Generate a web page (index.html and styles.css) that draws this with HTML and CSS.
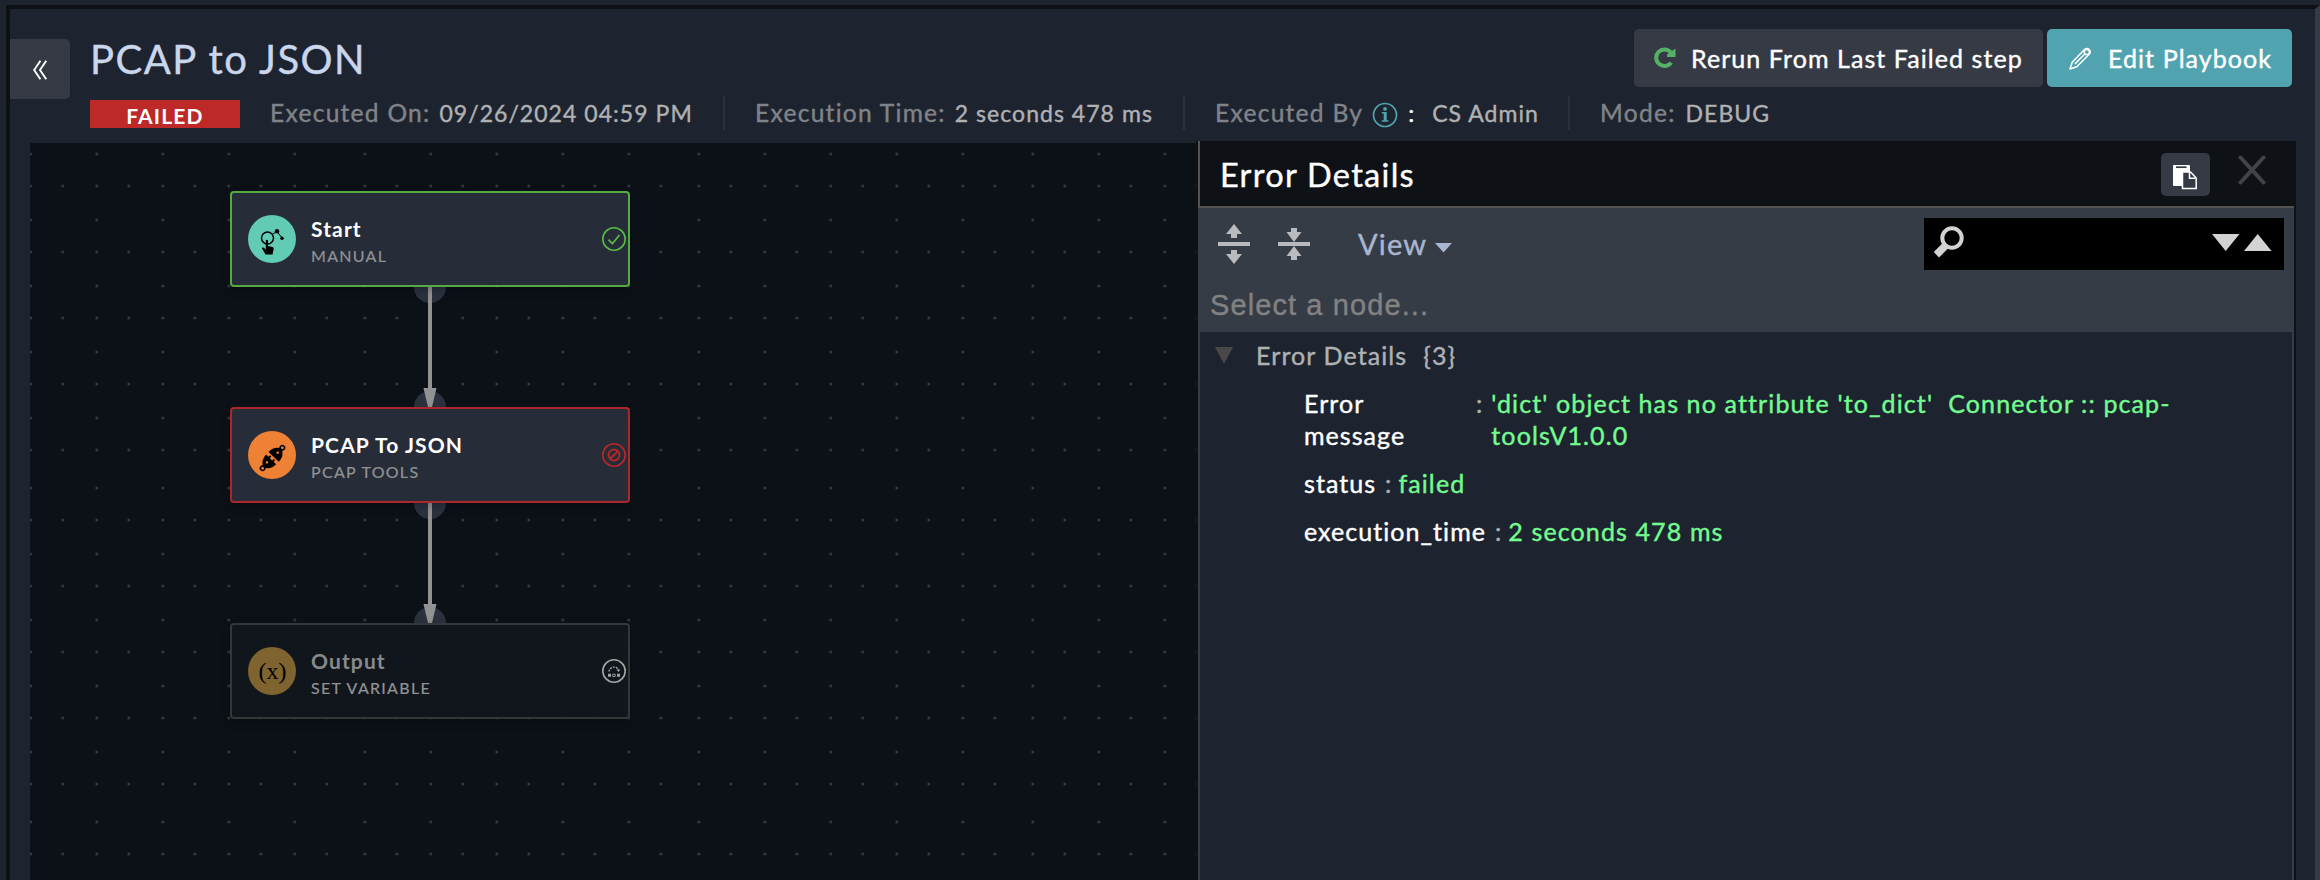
FILE: index.html
```html
<!DOCTYPE html>
<html lang="en">
<head>
<meta charset="utf-8">
<title>PCAP to JSON</title>
<link rel="stylesheet" href="styles.css">
</head>
<body>
<div class="app">
  <main class="page">
    <header class="header">
      <button class="toggle" aria-label="Collapse">
        <svg width="18" height="24" viewBox="0 0 18 24" fill="none" stroke="#fff" stroke-width="2.300"><path d="M9.500 1 2 12l7.500 11M16.500 1 9 12l7.500 11"/></svg>
      </button>
      <div class="header-body">
        <div class="title-row">
          <h1 class="title">PCAP to JSON</h1>
          <div class="actions">
            <button class="btn btn-rerun">
              <svg width="22" height="22" viewBox="0 0 22 22"><path d="M17.200 15.600A8.300 8.300 0 1 1 16.700 5.200" fill="none" stroke="#55b166" stroke-width="4"/><path d="M21.500 1.500V10h-8.500v-2.600z" fill="#55b166"/></svg>
              <span>Rerun From Last Failed step</span>
            </button>
            <button class="btn btn-edit">
              <svg width="23" height="23" viewBox="0 0 23 23" fill="none" stroke="#fff" stroke-width="1.500" stroke-linejoin="round"><path d="M1 22 3.200 15.200 15.500 2.600a3.200 3.200 0 0 1 4.700 0 3.200 3.200 0 0 1 0 4.700L7.800 19.700z"/><path d="M6 16.900 15.500 7.300"/><circle cx="17.800" cy="5" r="2.600"/></svg>
              <span>Edit Playbook</span>
            </button>
          </div>
        </div>
        <div class="meta">
          <span class="badge">FAILED</span>
          <div class="meta-item"><span class="label">Executed On:</span><span class="value">09/26/2024 04:59 PM</span></div>
          <div class="meta-item"><span class="label">Execution Time:</span><span class="value">2 seconds 478 ms</span></div>
          <div class="meta-item meta-by"><span class="label">Executed By</span>
            <svg class="info" width="26" height="26" viewBox="0 0 26 26"><circle cx="13" cy="13" r="11.500" fill="none" stroke="#4fa3ae" stroke-width="1.700"/><path d="M9.800 10h4.900v8.200h1.600v1.500H9.800v-1.500h1.900v-6.700H9.800z" fill="#4fa3ae"/><circle cx="13" cy="6.900" r="1.900" fill="#4fa3ae"/></svg>
            <span class="colon">:</span><span class="value">CS Admin</span></div>
          <div class="meta-item meta-last"><span class="label">Mode:</span><span class="value">DEBUG</span></div>
        </div>
      </div>
    </header>

    <div class="workspace">
      <section class="canvas">
        <svg class="wires" width="1166" height="737" viewBox="0 0 1166 737">
          <defs>
            <g id="sparse" fill="#34383d"><circle cx="1.800" cy="2" r="1.500"/><circle cx="67.800" cy="2" r="1.500"/><circle cx="133.800" cy="2" r="1.500"/><circle cx="199.800" cy="2" r="1.500"/><circle cx="265.800" cy="2" r="1.500"/></g>
            <g id="full"><use href="#sparse"/><use href="#sparse" x="32"/></g>
            <pattern id="dots" width="334" height="334" patternUnits="userSpaceOnUse" x="-1" y="9">
              <use href="#sparse"/><use href="#full" y="32"/><use href="#sparse" y="66"/><use href="#full" y="98"/><use href="#sparse" y="132"/><use href="#full" y="164"/><use href="#sparse" y="198"/><use href="#full" y="230"/><use href="#sparse" y="264"/><use href="#full" y="296"/>
            </pattern>
          </defs>
          <rect width="1166" height="737" fill="url(#dots)"/>
          <g fill="#2b323e"><circle cx="400" cy="144" r="16"/><circle cx="400" cy="264" r="16"/><circle cx="400" cy="360" r="16"/><circle cx="400" cy="480" r="16"/></g>
          <g fill="#929292"><path d="M398 144h4v120h-4zM393.500 245h13l-4.500 19h-4z"/><path d="M398 360h4v120h-4zM393.500 461h13l-4.500 19h-4z"/></g>
        </svg>

        <article class="node node-start">
          <svg class="node-icon" width="48" height="48" viewBox="0 0 48 48"><circle cx="24" cy="24" r="24" fill="#61ccb3"/><circle cx="19.500" cy="23" r="6" fill="none" stroke="#000" stroke-width="1.500"/><path d="M24 19.500 29 16.500l5 6.500" fill="none" stroke="#000"/><circle cx="29" cy="16.300" r="2.200"/><circle cx="34" cy="23.200" r="1.700"/><path d="M17.800 25.500q1.200-1.300 2.200 0V31l4.500 1q1.500.5 1.200 2.200L24.500 39.500h-7L14 33.500q0-1.500 1.500-1l2.300 2z"/></svg>
          <div class="node-text"><div class="node-name">Start</div><div class="node-type">MANUAL</div></div>
          <svg class="node-state" width="24" height="24" viewBox="0 0 24 24" fill="none" stroke="#57bb45"><circle cx="12" cy="12" r="11.200" stroke-width="1.600"/><path d="m6.500 12.700 3.800 4 7.200-8.700" stroke-width="1.800"/></svg>
        </article>

        <article class="node node-pcap">
          <svg class="node-icon" width="48" height="48" viewBox="0 0 48 48"><circle cx="24" cy="24" r="24" fill="#ee8133"/><g transform="rotate(-46 24.500 27)"><path d="M11.500 27q3-7 11-7v3.200h2.200v2h-2.200v3.300h2.200v2h-2.200v3.500Q14.500 34 11.500 27z"/><path d="M37.500 27q-3-7-11.300-7v14Q34.500 34 37.500 27z"/><circle cx="10.300" cy="27" r="2.200" fill="none" stroke="#000" stroke-width="1.500"/><circle cx="38.700" cy="27" r="2.200" fill="none" stroke="#000" stroke-width="1.500"/><circle cx="17.500" cy="26" r="1.300" fill="#ee8133"/><circle cx="32" cy="27" r="1.300" fill="#ee8133"/></g></svg>
          <div class="node-text"><div class="node-name">PCAP To JSON</div><div class="node-type">PCAP TOOLS</div></div>
          <svg class="node-state" width="24" height="24" viewBox="0 0 24 24" fill="none" stroke="#ba2628"><circle cx="12" cy="12" r="11.200" stroke-width="1.600"/><circle cx="12" cy="12" r="5.500" stroke-width="1.800"/><path d="m8.300 15.500 7.400-7" stroke-width="1.800"/></svg>
        </article>

        <article class="node node-output">
          <svg class="node-icon" width="48" height="48" viewBox="0 0 48 48"><circle cx="24" cy="24" r="24" fill="#7f642f"/><text x="24.500" y="32" text-anchor="middle" class="fx">(x)</text></svg>
          <div class="node-text"><div class="node-name">Output</div><div class="node-type">SET VARIABLE</div></div>
          <svg class="node-state" width="24" height="24" viewBox="0 0 24 24" fill="none" stroke="#a3a4a6"><circle cx="12" cy="12" r="11.200" stroke-width="1.600"/><path d="M7 12.500a5 5 0 0 1 9.500-1.500" stroke-width="1.400" stroke-dasharray="2 1"/><path d="M14.500 10.500h3.600l-1.500 2.500z" fill="#a3a4a6" stroke="none"/><path d="M6 14.800h3v3H6zM15 14.800h3v3h-3z" fill="#a3a4a6" stroke="none"/><path d="M10.700 15.200h2.500v2.300h-2.500z" stroke-width=".9"/></svg>
        </article>
      </section>

      <aside class="panel">
        <div class="panel-head">
          <h2 class="panel-title">Error Details</h2>
          <button class="copy" aria-label="Copy">
            <svg width="26" height="28" viewBox="0 0 26 28"><rect x="1" y="1" width="17" height="21" rx="1" fill="#fff"/><path d="M4 3.200h10.500" stroke="#353945" stroke-width="1.700"/><path d="M10.500 8h8l5.700 6v10.500H10.500z" fill="#353945" stroke="#fff" stroke-width="1.500"/><path d="M17.500 8v6.200h6" fill="none" stroke="#fff" stroke-width="1.500"/></svg>
          </button>
          <svg class="close" width="28" height="30" viewBox="0 0 28 30" stroke="#434447" stroke-width="4" stroke-linecap="round"><path d="M2.500 2.500l23 25M25.500 2.500l-23 25"/></svg>
        </div>
        <div class="panel-body">
          <div class="tools">
            <svg class="tool" width="32" height="40" viewBox="0 0 32 40" fill="#b9babd"><path d="M0 18h32v4H0zM16 0l8 10h-5v4h-6v-4H8zM16 40l8-10h-5v-4h-6v4H8z"/></svg>
            <svg class="tool tool-collapse" width="32" height="40" viewBox="0 0 32 40" fill="#b9babd"><path d="M0 18h32v4H0zM16 18 8.500 8h4.500V4h6v4h4.500zM16 22l-7.500 10H13v4h6v-4h4.500z"/></svg>
            <span class="view">View</span>
            <svg class="caret" width="17" height="10" viewBox="0 0 17 10"><path d="M0 0h17L8.500 9.500z" fill="#a9b6cf"/></svg>
            <div class="search">
              <svg width="32" height="32" viewBox="0 0 32 32"><circle cx="19" cy="12" r="9.700" fill="none" stroke="#d3d3d3" stroke-width="4"/><path d="M10.200 16.500 15.500 22 6 31.500 .8 26z" fill="#d3d3d3"/></svg>
              <svg class="arrows" width="60" height="17" viewBox="0 0 60 17" fill="#d3d3d3"><path d="M0 0h27.500L13.700 17zM32 17h27.500L45.700 0z"/></svg>
            </div>
          </div>
          <div class="path">Select a node...</div>
          <div class="tree">
            <div class="tree-root">
              <svg width="18" height="17" viewBox="0 0 18 17"><path d="M0 0h18L9 17z" fill="#484848"/></svg>
              <span class="root-name">Error Details</span><span>{3}</span>
            </div>
            <div class="pair"><span class="key key-wide">Error message</span><span class="sep">:</span><span class="val">'dict' object has no attribute 'to_dict'&nbsp; Connector :: pcap-toolsV1.0.0</span></div>
            <div class="pair"><span class="key">status</span><span class="sep">:</span><span class="val">failed</span></div>
            <div class="pair"><span class="key">execution_time</span><span class="sep">:</span><span class="val">2 seconds 478 ms</span></div>
          </div>
        </div>
      </aside>
    </div>
  </main>
</div>
</body>
</html>
```
FILE: styles.css
```css
* { box-sizing: border-box; }
body {
  margin: 0;
  font-family: Lato, sans-serif;
  background: #1e242f;
  color: #b0b1b3;
  -webkit-text-stroke: .4px currentColor;
}
button { border: 0; padding: 0; font: inherit; color: #fff; letter-spacing: inherit; }
svg { display: block; flex: none; }
h1, h2 { margin: 0; font-weight: 400; }

.app {
  width: 2320px;
  height: 880px;
  padding: 5px 0 0 6px;
  overflow: hidden;
}
.page {
  height: 875px;
  border-top: 4px solid #0d1015;
  border-left: 4px solid #0d1015;
  border-right: 5px solid #353b47;
  display: flex;
  flex-direction: column;
}
.header { display: flex; height: 134px; flex: none; }
.toggle {
  width: 60px;
  height: 60px;
  margin: 30px 20px 0 0;
  display: flex;
  align-items: center;
  padding: 2px 0 0 21px;
  background: #353a45;
  border-radius: 0 5px 5px 0;
}
.toggle svg { height: 20px; }
.header-body { flex: 1; padding: 20px 23px 0 0; }
.title-row { display: flex; justify-content: space-between; align-items: center; height: 58px; }
.title { font-size: 40px; line-height: 58px; padding-top: 2px; letter-spacing: 1.5px; color: #c9d6ec; }
.actions { display: flex; gap: 4px; }
.btn {
  height: 58px;
  display: flex;
  align-items: center;
  gap: 15px;
  padding-left: 20px;
  font-size: 25px;
  letter-spacing: 1.07px;
  border-radius: 5px;
  white-space: nowrap;
}
.btn-rerun { width: 409px; background: #353a45; }
.btn-edit { width: 245px; background: #51a4af; }
.btn-edit svg { margin: 0 1px 0 2px; }

.meta {
  display: grid;
  grid-template-columns: 150px 485px 460px 385px 300px;
  height: 34px;
  margin-top: 9px;
}
.badge {
  height: 28px;
  margin-top: 4px;
  background: #bd2829;
  color: #fff;
  font-weight: 700;
  font-size: 21px;
  line-height: 31px;
  letter-spacing: 1.2px;
  text-align: center;
  -webkit-text-stroke: 0;
}
.meta-item {
  display: flex;
  align-items: baseline;
  gap: 9px;
  padding-left: 30px;
  line-height: 34px;
  border-right: 2px solid #2c313d;
  white-space: nowrap;
}
.meta-last { border-right: 0; }
.label { font-size: 24.6px; letter-spacing: 1.25px; color: #808389; }
.value { font-size: 23px; letter-spacing: 1.040px; color: #b0b1b3; }
.info { align-self: center; margin: 4px 0 0 0; }
.colon { font-size: 24px; color: #fff; margin: 0 9px 0 1px; }
.meta-last .value { margin-left: 1px; }

.workspace { flex: 1; display: flex; padding-left: 20px; min-height: 0; }
.canvas { position: relative; width: 1166px; background: #0c1118; overflow: hidden; }
.wires { position: absolute; left: 0; top: 0; }
.node {
  position: absolute;
  left: 200px;
  width: 400px;
  height: 96px;
  display: flex;
  align-items: center;
  padding: 0 2px 0 16px;
  background: #262d38;
  border: 2px solid #55ab42;
  border-radius: 4px;
  box-shadow: 0 3px 10px rgba(0, 0, 0, .25);
}
.node-start { top: 48px; }
.node-pcap { top: 264px; border-color: #ab2729; }
.node-output { top: 480px; border-color: #353638; background: #11161c; }
.node-text { flex: 1; padding: 4px 0 0 15px; }
.node-name { font-size: 21px; font-weight: 700; letter-spacing: 1.120px; line-height: 28px; color: #fff; -webkit-text-stroke: 0; }
.node-type { font-size: 16px; letter-spacing: 1.300px; line-height: 24px; color: #929395; padding-top: 1px; -webkit-text-stroke: .2px; }
.node-output .node-name { color: #88898b; }
.fx { font: 24px "Liberation Serif", serif; letter-spacing: 0; -webkit-text-stroke: 0; }

.panel {
  width: 1100px;
  margin-top: -2px;
  padding: 0 2px;
  background: #0e1115;
  display: flex;
  flex-direction: column;
}
.panel-head {
  height: 67px;
  flex: none;
  display: flex;
  border-left: 2px solid #555352;
  border-bottom: 2px solid #555352;
  padding-left: 20px;
}
.panel-title { flex: 1; font-size: 32.500px; line-height: 68px; letter-spacing: 1.300px; color: #fff; }
.copy {
  width: 49px;
  height: 43px;
  margin: 12px 28px 0 0;
  padding: 9px 0 0 11px;
  background: #353a45;
  border-radius: 5px;
}
.copy svg { margin-top: -2px; }
.close { margin: 14px 28px 0 0; }
.panel-body { flex: 1; background: #363c46; display: flex; flex-direction: column; padding: 0 2px; }
.tools { display: flex; align-items: center; height: 72px; padding-left: 18px; }
.tool-collapse { margin-left: 28px; }
.view { margin: 0 8px 0 48px; font-size: 29px; line-height: 72px; letter-spacing: 1.200px; color: #a9b6cf; }
.caret { margin-top: 7px; }
.search {
  width: 360px;
  height: 52px;
  margin: 0 8px 0 auto;
  padding: 8px 12px 0 9px;
  background: #000;
  display: flex;
  justify-content: space-between;
}
.arrows { margin-top: 8px; }
.path {
  height: 52px;
  padding-left: 10px;
  font: 29px/50px "Liberation Sans", Arial, sans-serif;
  letter-spacing: 1.100px;
  color: #828282;
}
.tree { flex: 1; background: #1e242f; font-size: 25px; line-height: 32px; letter-spacing: 1.050px; padding-top: 7px; }
.tree-root { display: flex; align-items: center; height: 32px; margin-bottom: 16px; padding-left: 15px; letter-spacing: 1.100px; }
.root-name { margin: 0 16px 0 23px; }
.pair { display: flex; margin: 0 0 16px 104px; }
.key { color: #fff; }
.key-wide { width: 172px; padding-right: 16px; }
.sep { margin: 0 6px 0 9px; }
.key-wide + .sep { margin: 0 8px 0 0; }
.val { color: #73fb8f; letter-spacing: 1.120px; }
.key-wide ~ .val { width: 700px; }
```
